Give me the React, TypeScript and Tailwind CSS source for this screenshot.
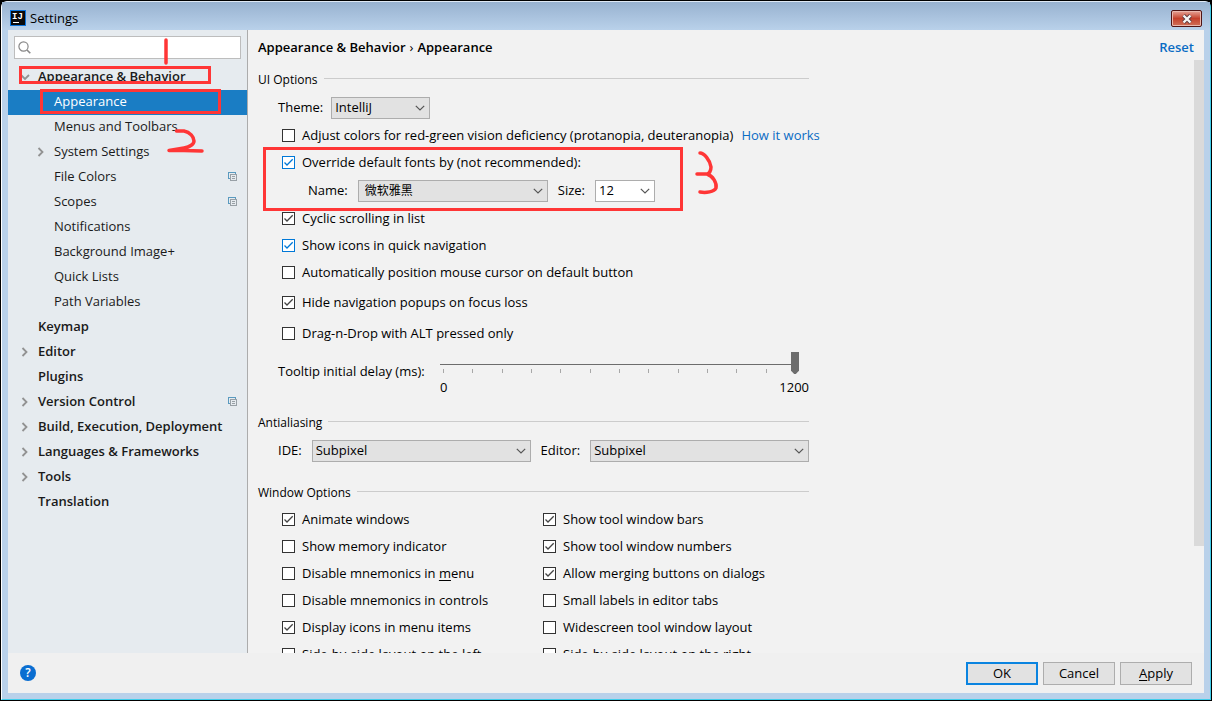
import { useId, type ReactNode } from "react";

type TreeItem = {
  label: string;
  level: 0 | 1;
  arrow?: "open" | "closed";
  shared?: boolean;
  selected?: boolean;
};

const TREE: TreeItem[] = [
  { label: "Appearance & Behavior", level: 0, arrow: "open" },
  { label: "Appearance", level: 1, selected: true },
  { label: "Menus and Toolbars", level: 1 },
  { label: "System Settings", level: 1, arrow: "closed" },
  { label: "File Colors", level: 1, shared: true },
  { label: "Scopes", level: 1, shared: true },
  { label: "Notifications", level: 1 },
  { label: "Background Image+", level: 1 },
  { label: "Quick Lists", level: 1 },
  { label: "Path Variables", level: 1 },
  { label: "Keymap", level: 0 },
  { label: "Editor", level: 0, arrow: "closed" },
  { label: "Plugins", level: 0 },
  { label: "Version Control", level: 0, arrow: "closed", shared: true },
  { label: "Build, Execution, Deployment", level: 0, arrow: "closed" },
  { label: "Languages & Frameworks", level: 0, arrow: "closed" },
  { label: "Tools", level: 0, arrow: "closed" },
  { label: "Translation", level: 0 },
];

function TreeArrow({ open }: { open: boolean }) {
  return (
    <svg viewBox="0 0 10 10" className="h-[10px] w-[10px]" fill="none" stroke="#929292" strokeWidth="1.8" aria-hidden="true">
      <path d={open ? "M1 3 L5 7 L9 3" : "M2.5 1 L6.5 5 L2.5 9"} />
    </svg>
  );
}

function SharedIcon() {
  return (
    <svg viewBox="0 0 10 10" className="h-[10px] w-[10px]" fill="none" shapeRendering="crispEdges" aria-hidden="true">
      <path d="M2 6.5 H0.5 V0.5 H7.5 V2" stroke="#5a9abf" />
      <path d="M2.5 2.5 H8.5 V8.5 H2.5 Z M4 4.5 H7 M4 6.5 H7" stroke="#98a0a6" />
    </svg>
  );
}

function TreeRow({ item }: { item: TreeItem }) {
  return (
    <li>
      <button
        type="button"
        className={
          "flex h-[25px] w-full items-center pr-[9px] pb-px text-left text-[13px] " +
          (item.level === 0 ? "pl-3 font-semibold " : "pl-7 ") +
          (item.selected ? "bg-[#1a7dc4] text-white" : "text-[#1a1a1a]")
        }
      >
        <span className="flex w-[18px] shrink-0 items-center">
          {item.arrow && <TreeArrow open={item.arrow === "open"} />}
        </span>
        <span className="flex-1 whitespace-nowrap">{item.label}</span>
        {item.shared && <SharedIcon />}
      </button>
    </li>
  );
}

function Check({ children, checked, blue }: { children: ReactNode; checked?: boolean; blue?: boolean }) {
  return (
    <label className="flex h-[27px] items-center gap-[7px] pl-6 text-[13px] whitespace-nowrap">
      <span className="grid h-[13px] w-[13px] shrink-0">
        <input
          type="checkbox"
          defaultChecked={checked}
          className={
            "peer col-start-1 row-start-1 h-[13px] w-[13px] appearance-none border bg-white " +
            (blue ? "border-[#0078d7]" : "border-[#333333]")
          }
        />
        <svg
          viewBox="0 0 13 13"
          className="pointer-events-none invisible col-start-1 row-start-1 h-[13px] w-[13px] peer-checked:visible"
          fill="none"
          stroke={blue ? "#0078d7" : "#444444"}
          strokeWidth="1.3"
          aria-hidden="true"
        >
          <path d="M2.5 6.5 L5 9 L10.7 3.3" />
        </svg>
      </span>
      <span>{children}</span>
    </label>
  );
}

function Combo({ id, value, size, light, inset }: { id: string; value: string; size: string; light?: boolean; inset?: boolean }) {
  return (
    <span className={"grid h-[22px] items-center " + size}>
      <select
        id={id}
        className={
          "col-start-1 row-start-1 h-[22px] w-full appearance-none border border-[#adadad] pr-5 pb-px outline-none " +
          (light ? "bg-white " : "bg-[#e2e2e2] ") +
          (inset ? "pl-[6px] text-[12px]" : "pl-[3px] text-[13px]")
        }
      >
        <option>{value}</option>
      </select>
      <svg
        viewBox="0 0 10 6"
        className="pointer-events-none col-start-1 row-start-1 mr-[5px] h-[6px] w-[10px] justify-self-end"
        fill="none"
        stroke="#555555"
        strokeWidth="1.2"
        aria-hidden="true"
      >
        <path d="M0.8 0.8 L5 5 L9.2 0.8" />
      </svg>
    </span>
  );
}

function Section({ title }: { title: string }) {
  return (
    <div className="flex h-5 items-center gap-[6px]">
      <h2 className="text-[12px] whitespace-nowrap">{title}</h2>
      <span className="mb-[3px] h-px flex-1 bg-[#cccccc]" />
    </div>
  );
}

function DelaySlider({ id }: { id: string }) {
  return (
    <div className="flex w-[369px] flex-col">
      <div className="mr-[10px] grid">
        <span className="col-start-1 row-start-1 mt-3 h-px bg-[#6d6d6d]" />
        <div className="col-start-1 row-start-1 mx-[3px] mt-[17px] flex h-1 justify-between">
          {Array.from({ length: 13 }, (_, i) => (
            <span key={i} className="w-px bg-[#a8a8a8]" />
          ))}
        </div>
        <input
          id={id}
          type="range"
          min={0}
          max={1200}
          defaultValue={1200}
          className="relative col-start-1 row-start-1 h-[22px] w-full appearance-none bg-transparent outline-none [&::-webkit-slider-thumb]:h-[22px] [&::-webkit-slider-thumb]:w-2 [&::-webkit-slider-thumb]:appearance-none [&::-webkit-slider-thumb]:bg-[#6d6d6d] [&::-webkit-slider-thumb]:[clip-path:polygon(0_0,100%_0,100%_85%,60%_100%,40%_100%,0_85%)]"
        />
      </div>
      <div className="mt-[3px] flex justify-between text-[13px] leading-5">
        <span>0</span>
        <span>1200</span>
      </div>
    </div>
  );
}

function Annotations() {
  return (
    <svg
      viewBox="1 1 760 230"
      className="pointer-events-none absolute top-0 left-0 h-[230px] w-[760px]"
      fill="none"
      stroke="#ff3636"
      strokeWidth="3"
      aria-hidden="true"
    >
      <rect x="20.5" y="67.5" width="189" height="15" />
      <rect x="41.5" y="90.5" width="178" height="22" />
      <rect x="264.5" y="148.5" width="417" height="61" />
      <g strokeLinecap="round" strokeLinejoin="round" strokeWidth="3.5">
        <path d="M166 40 V63" />
        <path d="M176.500 131 H184 C190 132 194 137 194 141 C194 144 190 147 184 148 L169 150.500 H184 L202 151" />
        <path d="M700 153 C704 153 710 160 711 167 C711 171 709 174 707 174 H697 M707 174 C713 176 717 183 716 188 C714 192 706 193 700 192" />
      </g>
    </svg>
  );
}

const BUTTON = "flex h-[23px] w-[72px] items-center justify-center bg-[#e2e2e2] text-[13px]";

export default function App() {
  const theme = useId();
  const fontName = useId();
  const fontSize = useId();
  const delay = useId();
  const ide = useId();
  const editor = useId();

  return (
    <div className="relative flex h-screen flex-col overflow-hidden border border-black bg-black font-['Open_Sans','Noto_Sans_CJK_SC',sans-serif] text-black">
      <div className="flex min-h-0 flex-1 flex-col rounded-t-md border border-t-[#dfe9f5] border-r-[#40cdea] border-b-[#40cdea] border-l-white bg-[#b9d1ea] px-[6px] pb-[6px]">
        <header className="-mx-[6px] flex h-7 shrink-0 items-start justify-between bg-linear-to-b from-[#98b2d0] to-[#b9d1ea] pr-2 pl-2">
          <div className="flex h-full items-center gap-1 pt-1">
            <svg viewBox="0 0 16 16" className="h-4 w-4" aria-hidden="true">
              <rect width="16" height="16" fill="#0c74dc" />
              <rect x="1" y="1" width="14" height="14" fill="#0a0a0a" />
              <text x="2" y="9" fontSize="9" fontWeight="bold" fontFamily="Liberation Mono, monospace" fill="#ffffff">
                IJ
              </text>
              <rect x="3" y="12" width="6" height="1" fill="#ffffff" />
            </svg>
            <h1 className="pt-px text-[13px]">Settings</h1>
          </div>
          <button
            type="button"
            aria-label="Close"
            className="mt-2 flex h-[17px] w-[31px] items-center justify-center rounded-[2px] border border-[#4f1414] bg-linear-to-b from-[#e5a397] via-[#c4402b] to-[#cf6f58] inset-ring inset-ring-[#eab8ae]"
          >
            <svg viewBox="0 0 12 10" className="h-[10px] w-3" aria-hidden="true">
              <path d="M2.5 1.5 L9.5 8.5 M9.5 1.5 L2.5 8.5" stroke="#5a3a40" strokeWidth="4" />
              <path d="M2.5 1.5 L9.5 8.5 M9.5 1.5 L2.5 8.5" stroke="#f6f6f6" strokeWidth="2.4" />
            </svg>
          </button>
        </header>

        <div className="flex min-h-0 flex-1 bg-[#f2f2f2]">
          <nav aria-label="Settings" className="w-60 shrink-0 border-r border-[#acacac] bg-[#e6ebef]">
            <div className="mx-[6px] mt-[6px] mb-[6px] flex h-[23px] items-center border border-[#bdbdbd] bg-white pl-[3px]">
              <svg viewBox="0 0 13 13" className="h-[13px] w-[13px]" fill="none" stroke="#888888" strokeWidth="1.2" aria-hidden="true">
                <circle cx="5.5" cy="5.5" r="4.6" />
                <path d="M9 9 L12.3 12.3" strokeWidth="1.6" />
              </svg>
              <input type="search" aria-label="Search settings" className="min-w-0 flex-1 bg-transparent px-1 text-[13px] outline-none" />
            </div>
            <ul>
              {TREE.map((item) => (
                <TreeRow key={item.label} item={item} />
              ))}
            </ul>
          </nav>

          <main className="flex min-w-0 flex-1 flex-col">
            <div className="flex h-[30px] shrink-0 items-center justify-between pt-[5px] pr-[10px] pl-[10px] text-[13px] font-semibold">
              <p className="flex gap-1">
                <span>Appearance &amp; Behavior</span>
                <span className="font-normal">›</span>
                <span>Appearance</span>
              </p>
              <a href="#reset" className="text-[#0a6cc4]">
                Reset
              </a>
            </div>

            <div className="flex min-h-0 flex-1">
              <div className="min-w-0 flex-1 overflow-hidden pt-[10px] pl-[10px]">
                <div className="max-w-[551px]">
                  <Section title="UI Options" />
                  <div className="mt-[7px] flex items-center gap-2 pl-5 text-[13px]">
                    <label htmlFor={theme}>Theme:</label>
                    <Combo id={theme} value="IntelliJ" size="w-[99px]" />
                  </div>
                  <div className="mt-[3px] flex items-center gap-2">
                    <Check>Adjust colors for red-green vision deficiency (protanopia, deuteranopia)</Check>
                    <a href="#how" className="text-[13px] whitespace-nowrap text-[#0a6cc4]">
                      How it works
                    </a>
                  </div>
                  <Check checked blue>
                    Override default fonts by (not recommended):
                  </Check>
                  <div className="mt-px flex h-7 items-center gap-[10px] pl-[50px] text-[13px]">
                    <label htmlFor={fontName}>Name:</label>
                    <Combo id={fontName} value="微软雅黑" size="w-[190px]" inset />
                    <label htmlFor={fontSize}>Size:</label>
                    <Combo id={fontSize} value="12" size="w-[60px]" light />
                  </div>
                  <Check checked>Cyclic scrolling in list</Check>
                  <Check checked blue>
                    Show icons in quick navigation
                  </Check>
                  <Check>Automatically position mouse cursor on default button</Check>
                  <div className="mt-[3px]">
                    <Check checked>Hide navigation popups on focus loss</Check>
                  </div>
                  <div className="mt-1">
                    <Check>Drag-n-Drop with ALT pressed only</Check>
                  </div>
                  <div className="mt-[5px] flex justify-between pl-5">
                    <label htmlFor={delay} className="mt-[9px] text-[13px] leading-5 whitespace-nowrap">
                      Tooltip initial delay (ms):
                    </label>
                    <DelaySlider id={delay} />
                  </div>
                  <div className="mt-[16px]">
                    <Section title="Antialiasing" />
                  </div>
                  <div className="mt-[7px] flex items-center gap-[10px] pl-5 text-[13px]">
                    <label htmlFor={ide}>IDE:</label>
                    <Combo id={ide} value="Subpixel" size="flex-1" />
                    <label htmlFor={editor}>Editor:</label>
                    <Combo id={editor} value="Subpixel" size="flex-1" />
                  </div>
                  <div className="mt-[21px]">
                    <Section title="Window Options" />
                  </div>
                  <div className="mt-[3px] grid grid-cols-[261px_1fr]">
                    <Check checked>Animate windows</Check>
                    <Check checked>Show tool window bars</Check>
                    <Check>Show memory indicator</Check>
                    <Check checked>Show tool window numbers</Check>
                    <Check>
                      Disable mnemonics in <u className="underline-offset-2">m</u>enu
                    </Check>
                    <Check checked>Allow merging buttons on dialogs</Check>
                    <Check>Disable mnemonics in controls</Check>
                    <Check>Small labels in editor tabs</Check>
                    <Check checked>Display icons in menu items</Check>
                    <Check>Widescreen tool window layout</Check>
                    <Check>Side-by-side layout on the left</Check>
                    <Check>Side-by-side layout on the right</Check>
                  </div>
                </div>
              </div>
              <div className="w-[10px] shrink-0">
                <div className="h-[82%] bg-[#dadada]" />
              </div>
            </div>
          </main>
        </div>

        <footer className="flex h-10 shrink-0 items-center justify-between bg-[#f0f0f0] pr-3 pl-3">
          <button
            type="button"
            aria-label="Help"
            className="flex h-4 w-4 items-center justify-center rounded-full bg-[#0a6ed1] text-[12px] font-semibold text-white"
          >
            ?
          </button>
          <div className="flex gap-[5px] pt-px">
            <button type="button" className={BUTTON + " border-2 border-[#0a84e0]"}>
              OK
            </button>
            <button type="button" className={BUTTON + " border border-[#adadad]"}>
              Cancel
            </button>
            <button type="button" className={BUTTON + " border border-[#adadad]"}>
              <span>
                <u className="underline-offset-2">A</u>pply
              </span>
            </button>
          </div>
        </footer>
      </div>
      <Annotations />
    </div>
  );
}
